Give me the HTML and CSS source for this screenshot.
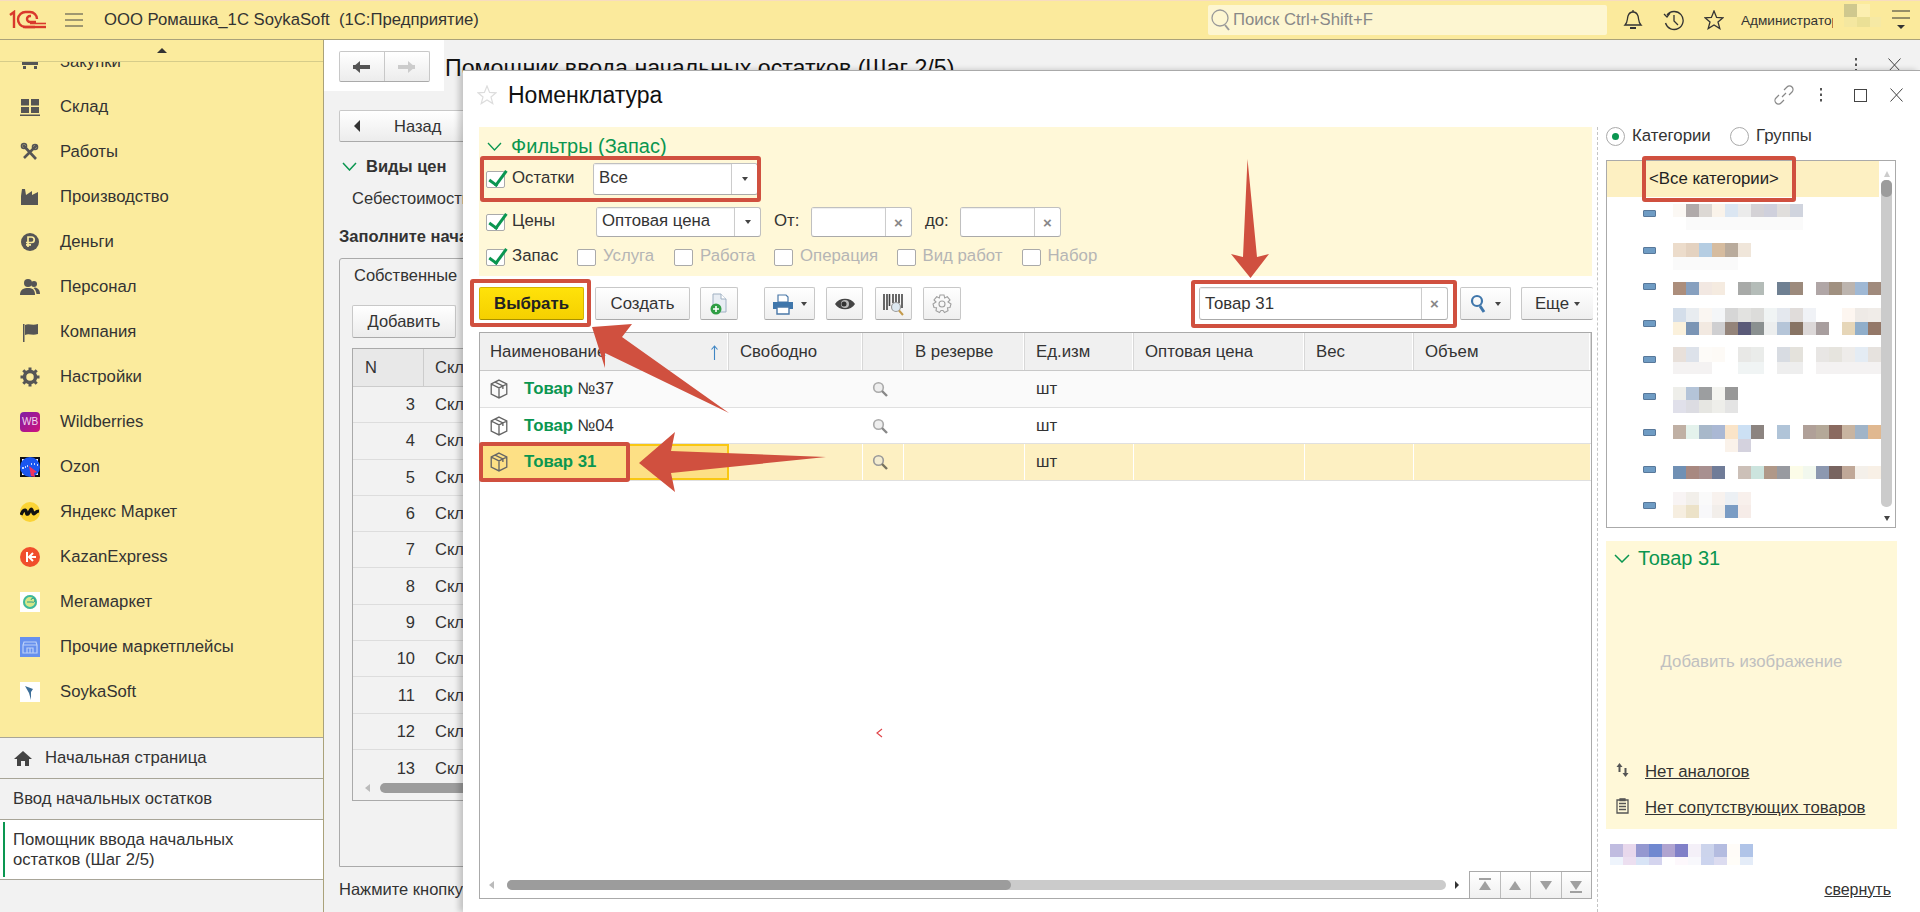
FILE: index.html
```html
<!DOCTYPE html>
<html lang='en'>

<head>
    <meta charset='UTF-8'>
    <title>Номенклатура</title>
    <link rel="stylesheet" href="styles.css">
</head>

<body>
    <div class='topbar'>
        <svg class='logo' width='38' height='20' viewBox='0 0 38 20' fill='none' stroke='#d9382c' stroke-width='2.4'>
            <path d='M1 5 L5 2 V18' />
            <path d='M26 17 H16 A7.5 7.5 0 1 1 17 2 H21 A7 7 0 0 1 28 9' />
            <path d='M27 12 H21 A3 3 0 1 1 21 6 H22' />
            <path d='M14 17 H37' />
            <path d='M21 13.5 H37' stroke-width='1.6' />
        </svg>
        <svg class='burger' width='18' height='14' viewBox='0 0 18 14' stroke='#444' stroke-width='1.2'>
            <path d='M0 1 H18 M0 7 H18 M0 13 H18' />
        </svg>
        <span class='app-title'>ООО Ромашка_1С SoykaSoft&nbsp; (1С:Предприятие)</span>
        <div class='global-search'>
            <svg width='20' height='24' viewBox='0 0 20 24' fill='none' stroke='#999' stroke-width='1.3'>
                <circle cx='9' cy='10' r='8' />
                <path d='M14 17 L18 22' stroke-width='2' />
            </svg>
            <span>Поиск Ctrl+Shift+F</span>
        </div>
        <svg class='top-icon bell' width='20' height='22' viewBox='0 0 20 22' fill='none' stroke='#333' stroke-width='1.3'>
            <path d='M2 16 C5 13 4 10 5 7 C6 4 8 3 10 3 C12 3 14 4 15 7 C16 10 15 13 18 16 Z' />
            <path d='M10 1 V3' />
            <path d='M7 19 H13' stroke-width='2' />
        </svg>
        <svg class='top-icon history' width='21' height='21' viewBox='0 0 21 21' fill='none' stroke='#333' stroke-width='1.3'>
            <path d='M4 5 A9 9 0 1 1 2.5 13' />
            <path d='M1 4 L4 7 L7 3' />
            <path d='M11 5 V11 L15 15' />
        </svg>
        <svg class='top-icon star' width='20' height='20' viewBox='0 0 20 20' fill='none' stroke='#333' stroke-width='1.3'>
            <path d='M10 1 L12.6 7.4 L19 7.8 L14 12 L15.8 18.6 L10 15 L4.2 18.6 L6 12 L1 7.8 L7.4 7.4 Z' />
        </svg>
        <span class='user-name'>Администратор</span>
        <svg class='avatar' width='48' height='32' viewBox='0 0 48 32'>
            <rect x='11' y='0' width='13' height='13' fill='#cfc88e' />
            <rect x='24' y='0' width='13' height='13' fill='#fcefb0' />
            <rect x='11' y='13' width='13' height='10' fill='#f4e7a0' />
            <rect x='24' y='13' width='13' height='10' fill='#ebe096' />
            <rect x='37' y='13' width='11' height='10' fill='#f6e9a4' />
        </svg>
        <svg class='top-menu' width='18' height='20' viewBox='0 0 18 20' stroke='#333' stroke-width='1.2'>
            <path d='M0 1 H18 M0 8 H18' />
            <path d='M5 15 H13 L9 19 Z' fill='#333' stroke='none' />
        </svg>
    </div>

    <div class='workspace'>
        <div class='sidebar'>
            <div class='side-scroll'><i class='tri-up'></i></div>
            <div class='side-list'>
                <div class='side-inner'>
                    <div class='side-item'>
                        <svg class='side-icon' viewBox='0 0 20 20' fill='#555'>
                            <path d='M2 4 H18 V13 H2 Z M3 14 H6 V17 H3 Z M14 14 H17 V17 H14 Z' />
                        </svg>Закупки
                    </div>
                    <div class='side-item'>
                        <svg class='side-icon' viewBox='0 0 20 20' fill='#555'>
                            <path d='M1 2 H9 V8.500 H1 Z M11 2 H19 V8.500 H11 Z M1 10 H9 V16 H1 Z M11 10 H19 V16 H11 Z M0 17.500 H20 V19 H0 Z' />
                        </svg>Склад
                    </div>
                    <div class='side-item'>
                        <svg class='side-icon' viewBox='0 0 20 20' fill='none' stroke='#555' stroke-width='2.6'>
                            <path d='M3 3 L16 17 M17 3 L4 16' />
                            <circle cx='15' cy='5' r='2.500' stroke-width='1.600' />
                            <circle cx='4' cy='4' r='2.500' stroke-width='1.600' />
                        </svg>Работы
                    </div>
                    <div class='side-item'>
                        <svg class='side-icon' viewBox='0 0 20 20' fill='#555'>
                            <path d='M1 18 V9 L2 2 H5 L6 8 L12 4 V8 L18 5 V18 Z' />
                        </svg>Производство
                    </div>
                    <div class='side-item'>
                        <svg class='side-icon' viewBox='0 0 20 20'>
                            <circle cx='10' cy='10' r='9' fill='#555' />
                            <path d='M8 15 V5 H11.500 A2.700 2.700 0 0 1 11.500 10.500 H6 M6 12.800 H11' fill='none' stroke='#fbeb9d' stroke-width='1.700' />
                        </svg>Деньги
                    </div>
                    <div class='side-item'>
                        <svg class='side-icon' viewBox='0 0 20 20' fill='#555'>
                            <circle cx='8' cy='6' r='4' />
                            <path d='M0 18 C0 12 4 11 8 11 C12 11 15 12 15 18 Z' />
                            <circle cx='14' cy='7' r='3' />
                            <path d='M15 10.500 C18 11 20 13 20 17 H16.500 C16 14 15 12 13.500 11 Z' />
                        </svg>Персонал
                    </div>
                    <div class='side-item'>
                        <svg class='side-icon' viewBox='0 0 20 20' fill='#555'>
                            <path d='M3 2 H4.500 V20 H3 Z M5 3 C9 1 12 4 18 2 V12 C12 14 9 11 5 13 Z' />
                        </svg>Компания
                    </div>
                    <div class='side-item'>
                        <svg class='side-icon' viewBox='0 0 20 20' fill='none' stroke='#555'>
                            <circle cx='10' cy='10' r='5.500' stroke-width='3.500' />
                            <path d='M10 0.500 V4 M10 16 V19.500 M0.500 10 H4 M16 10 H19.500 M3.300 3.300 L5.500 5.500 M14.500 14.500 L16.700 16.700 M16.700 3.300 L14.500 5.500 M5.500 14.500 L3.300 16.700' stroke-width='3' />
                        </svg>Настройки
                    </div>
                    <div class='side-item'>
                        <span class='side-badge wb'>WB</span>Wildberries
                    </div>
                    <div class='side-item'>
                        <svg class='side-icon' viewBox='0 0 20 20'>
                            <rect width='20' height='20' fill='#111' />
                            <rect x='2' y='2' width='16' height='16' fill='#fff' />
                            <circle cx='10' cy='10' r='10' fill='#1a56f0' />
                            <path d='M2 11 H4 M5 10 H6 M7 9 H8 M11 7 H12 M14 7 H15 M17 8 H18' stroke='#fff' stroke-width='1.500' />
                            <path d='M9 9 L17 15 L14 16 L15 20 L11 19 Z' fill='#f0345f' />
                        </svg>Ozon
                    </div>
                    <div class='side-item'>
                        <svg class='side-icon' viewBox='0 0 20 20'>
                            <circle cx='10' cy='10' r='10' fill='#fbd335' />
                            <path d='M1 13 C3 8 5 7 6 9 C7 11 6 13 8 12 C10 10 11 5 12 8 C13 11 13 13 15 11 C16 10 17 9 19 9' fill='none' stroke='#111' stroke-width='3.200' />
                        </svg>Яндекс Маркет
                    </div>
                    <div class='side-item'>
                        <svg class='side-icon' viewBox='0 0 20 20'>
                            <circle cx='10' cy='10' r='10' fill='#f04e2c' />
                            <path d='M7 5 V15 M16 10 H10 M13 6 L9 10 L13 14' fill='none' stroke='#fff' stroke-width='2' />
                        </svg>KazanExpress
                    </div>
                    <div class='side-item'>
                        <svg class='side-icon' viewBox='0 0 20 20'>
                            <rect width='20' height='20' fill='#fff' />
                            <circle cx='10' cy='10' r='7' fill='#d6e88a' />
                            <circle cx='10' cy='10' r='6' fill='none' stroke='#3db8a0' stroke-width='2' />
                            <path d='M7 10 H12 A2 2 0 1 0 11 8' fill='none' stroke='#2c9f8c' stroke-width='1' />
                        </svg>Мегамаркет
                    </div>
                    <div class='side-item'>
                        <svg class='side-icon' viewBox='0 0 20 20'>
                            <rect width='20' height='20' fill='#6690ee' />
                            <path d='M4 5 H16 L17 8 V16 H3 V8 Z M3 8 H17 M7 16 V11 H13 V16 M10 11 V16' fill='none' stroke='#bcd0f8' stroke-width='1.200' />
                        </svg>Прочие маркетплейсы
                    </div>
                    <div class='side-item'>
                        <svg class='side-icon' viewBox='0 0 20 20'>
                            <rect width='20' height='20' fill='#fff' />
                            <path d='M5 4 L13 7 L11 10 L11 18 L9 11 Z' fill='#3c6e98' />
                        </svg>SoykaSoft
                    </div>
                </div>
            </div>
            <div class='side-tab home'>
                <svg width='18' height='16' viewBox='0 0 18 16' fill='#444'>
                    <path d='M9 1 L18 9 H15 V16 H11 V11 H7 V16 H3 V9 H0 Z' />
                </svg>Начальная страница
            </div>
            <div class='side-tab'>Ввод начальных остатков</div>
            <div class='side-tab active'>Помощник ввода начальных<br>остатков (Шаг 2/5)</div>
            <div class='side-rest'></div>
        </div>

        <div class='main'>
            <div class='nav-block'>
                <div class='nav-btns'>
                    <span class='nav-btn'><i class='arrow-left'></i></span>
                    <span class='nav-btn off'><i class='arrow-right'></i></span>
                </div>
            </div>
            <div class='page-title'>Помощник ввода начальных остатков (Шаг 2/5)</div>
            <div class='page-tools'>
                <svg width='4' height='14' viewBox='0 0 4 14' fill='#555'>
                    <path d='M1 0 H3 V2.500 H1 Z M1 5.500 H3 V8 H1 Z M1 11 H3 V13.500 H1 Z' />
                </svg>
                <svg width='13' height='14' viewBox='0 0 13 14' stroke='#444'>
                    <path d='M0.500 0.500 L12.500 13.500 M12.500 0.500 L0.500 13.500' />
                </svg>
            </div>
            <div class='page-body'>
                <div class='back-btn'><i class='tri-left'></i><span>Назад</span></div>
                <div class='group-head'>
                    <svg class='chevron' width='15' height='9' viewBox='0 0 15 9' fill='none' stroke='#0a9650' stroke-width='1.500'>
                        <path d='M1 1 L7.500 8 L14 1' />
                    </svg>Виды цен
                </div>
                <div class='price-line'>Себестоимость</div>
                <div class='fill-head'>Заполните начальные</div>
                <div class='tab-panel'>
                    <div class='tab-name'>Собственные</div>
                    <div class='add-btn'>Добавить</div>
                    <div class='back-table'>
                        <div class='back-head'><span class='back-n'>N</span><span class='back-s'>Скл</span></div>
                        <div class='back-row'><span class='back-n'>3</span><span class='back-s'>Скл</span></div>
                        <div class='back-row'><span class='back-n'>4</span><span class='back-s'>Скл</span></div>
                        <div class='back-row'><span class='back-n'>5</span><span class='back-s'>Скл</span></div>
                        <div class='back-row'><span class='back-n'>6</span><span class='back-s'>Скл</span></div>
                        <div class='back-row'><span class='back-n'>7</span><span class='back-s'>Скл</span></div>
                        <div class='back-row'><span class='back-n'>8</span><span class='back-s'>Скл</span></div>
                        <div class='back-row'><span class='back-n'>9</span><span class='back-s'>Скл</span></div>
                        <div class='back-row'><span class='back-n'>10</span><span class='back-s'>Скл</span></div>
                        <div class='back-row'><span class='back-n'>11</span><span class='back-s'>Скл</span></div>
                        <div class='back-row'><span class='back-n'>12</span><span class='back-s'>Скл</span></div>
                        <div class='back-row last'><span class='back-n'>13</span><span class='back-s'>Скл</span></div>
                        <div class='back-scroll'><i class='tri-left small'></i><span class='back-thumb'></span></div>
                    </div>
                </div>
                <div class='press-line'>Нажмите кнопку</div>
            </div>
        </div>
    </div>

    <!-- selection form over the wizard -->
    <div class='modal'>
        <div class='modal-head'>
            <svg class='modal-star' width='20' height='20' viewBox='0 0 20 20' fill='none' stroke='#ddd' stroke-width='1.200'>
                <path d='M10 1 L12.600 7.400 L19 7.800 L14 12 L15.800 18.600 L10 15 L4.200 18.600 L6 12 L1 7.800 L7.400 7.400 Z' />
            </svg>
            <span class='modal-title'>Номенклатура</span>
            <svg class='head-link' width='20' height='20' viewBox='0 0 20 20' fill='none' stroke='#888' stroke-width='1.200'>
                <path d='M8 12 L12 8 M10 5 L13 2 A3 3 0 0 1 18 7 L15 10 M10 15 L7 18 A3 3 0 0 1 2 13 L5 10' />
            </svg>
            <svg class='head-dots' width='4' height='14' viewBox='0 0 4 14' fill='#555'>
                <path d='M1 0 H3 V2.500 H1 Z M1 5.500 H3 V8 H1 Z M1 11 H3 V13.500 H1 Z' />
            </svg>
            <span class='head-square'></span>
            <svg class='head-close' width='13' height='14' viewBox='0 0 13 14' stroke='#444'>
                <path d='M0.500 0.500 L12.500 13.500 M12.500 0.500 L0.500 13.500' />
            </svg>
        </div>

        <div class='modal-body'>
            <div class='left-col'>
                <div class='filters'>
                    <div class='filters-head'>
                        <svg width='15' height='9' viewBox='0 0 15 9' fill='none' stroke='#0a9650' stroke-width='1.300'>
                            <path d='M1 1 L7.500 8 L14 1' />
                        </svg>
                        <span>Фильтры (Запас)</span>
                    </div>
                    <div class='f-row r1'>
                        <label class='check lead1'><i class='box on'></i>Остатки</label>
                        <div class='field w-select1'><span class='f-val'>Все</span><span class='f-btn'><i class='tri-down'></i></span></div>
                    </div>
                    <div class='f-row r2'>
                        <label class='check lead2'><i class='box on'></i>Цены</label>
                        <div class='field w-select2'><span class='f-val'>Оптовая цена</span><span class='f-btn'><i class='tri-down'></i></span></div>
                        <span class='from-lbl'>От:</span>
                        <div class='field w-date'><span class='f-val'></span><span class='f-btn x'>×</span></div>
                        <span class='to-lbl'>до:</span>
                        <div class='field w-date'><span class='f-val'></span><span class='f-btn x'>×</span></div>
                    </div>
                    <div class='f-row r3'>
                        <label class='check c-zapas'><i class='box on'></i>Запас</label>
                        <label class='check off c-usl'><i class='box'></i>Услуга</label>
                        <label class='check off c-rab'><i class='box'></i>Работа</label>
                        <label class='check off c-op'><i class='box'></i>Операция</label>
                        <label class='check off c-vid'><i class='box'></i>Вид работ</label>
                        <label class='check off'><i class='box'></i>Набор</label>
                    </div>
                </div>

                <div class='toolbar'>
                    <span class='btn primary'>Выбрать</span>
                    <span class='btn create'>Создать</span>
                    <span class='btn icon-btn new'>
                        <svg width='20' height='22' viewBox='0 0 20 22'>
                            <path d='M4 1 H12 L17 6 V19 H4 Z' fill='#e8edf3' stroke='#9fb0c2' />
                            <path d='M12 1 V6 H17' fill='#fff' stroke='#9fb0c2' />
                            <circle cx='7' cy='16' r='5.500' fill='#2f9e44' />
                            <path d='M7 13 V19 M4 16 H10' stroke='#fff' stroke-width='1.600' />
                        </svg>
                    </span>
                    <span class='btn icon-btn print'>
                        <svg width='22' height='22' viewBox='0 0 22 22'>
                            <path d='M6 2 H14 L16 4 V9 H6 Z' fill='#fff' stroke='#4a78a8' stroke-width='1.200' />
                            <path d='M1 9 H21 V16 H1 Z' fill='#3f76ab' />
                            <path d='M5 14 H17 V21 H5 Z' fill='#fff' stroke='#4a78a8' stroke-width='1.400' />
                        </svg>
                        <i class='tri-down'></i>
                    </span>
                    <span class='btn icon-btn eye'>
                        <svg width='20' height='14' viewBox='0 0 20 14'>
                            <path d='M0 7 C4 0 16 0 20 7 C16 14 4 14 0 7 Z' fill='#444' />
                            <circle cx='10' cy='7' r='4' fill='#bbb' />
                            <circle cx='9' cy='7' r='2.500' fill='#333' />
                        </svg>
                    </span>
                    <span class='btn icon-btn barcode'>
                        <svg width='22' height='24' viewBox='0 0 22 24'>
                            <path d='M1 2 V18 M4 2 V18 M6.500 2 V14 M10 2 V11 M13 2 V10 M16 2 V11 M19 2 V16' stroke='#444' stroke-width='1.600' />
                            <circle cx='13' cy='15' r='4.500' fill='#dde8f0' stroke='#9a9a9a' stroke-width='1.200' />
                            <path d='M16 18.500 L20 23' stroke='#c49a4a' stroke-width='2' />
                        </svg>
                    </span>
                    <span class='btn icon-btn gear'>
                        <svg width='20' height='20' viewBox='0 0 20 20' fill='none' stroke='#a0a0a0' stroke-width='1.100'>
                            <path d='M8 1 H12 L12.700 4 L15.300 2.800 L18 6 L16 8 L19 10 L18 13.500 L15.500 13.700 L16 16.800 L12.500 18.500 L11 16.500 L9 16.500 L7.500 18.500 L4 16.800 L4.500 13.700 L2 13.500 L1 10 L4 8 L2 6 L4.700 2.800 L7.300 4 Z' />
                            <circle cx='10' cy='10' r='3' />
                        </svg>
                    </span>
                    <div class='field search-field'><span class='f-val'>Товар 31</span><span class='f-btn x'>×</span></div>
                    <span class='btn icon-btn find'>
                        <svg width='16' height='20' viewBox='0 0 16 20' fill='none' stroke='#3f76ab'>
                            <circle cx='7' cy='7' r='5' stroke-width='2.200' />
                            <path d='M10 12 L14 18' stroke-width='3' />
                        </svg>
                        <i class='tri-down'></i>
                    </span>
                    <span class='btn more'>Еще <i class='tri-down'></i></span>
                </div>

                <div class='grid-box'>
                    <div class='g-row g-head'>
                        <span class='cell'>Наименование
                            <svg class='sort' width='9' height='15' viewBox='0 0 9 15' fill='none' stroke='#3f86c4' stroke-width='1.100'>
                                <path d='M4.500 15 V1 M1.500 4.500 L4.500 1 L7.500 4.500' />
                            </svg>
                        </span>
                        <span class='cell'>Свободно</span>
                        <span class='cell'></span>
                        <span class='cell'>В резерве</span>
                        <span class='cell'>Ед.изм</span>
                        <span class='cell'>Оптовая цена</span>
                        <span class='cell'>Вес</span>
                        <span class='cell'>Объем</span>
                    </div>
                    <div class='g-row odd'>
                        <span class='cell name'>
                            <svg class='cube' width='18' height='20' viewBox='0 0 16 18' fill='none' stroke='#666' stroke-width='1.200'>
                                <path d='M8 1 L15 4.500 V13.500 L8 17 L1 13.500 V4.500 Z M1 4.500 L8 8 L15 4.500 M8 8 V17 M4.500 2.800 L11.500 6.300 V9' />
                            </svg><b>Товар</b> №37
                        </span>
                        <span class='cell'></span>
                        <span class='cell mag'>
                            <svg width='16' height='16' viewBox='0 0 16 16' fill='none'>
                                <circle cx='6.500' cy='6.500' r='4.800' fill='#eee' stroke='#aaa' stroke-width='1.600' />
                                <path d='M10 10 L15 15' stroke='#888' stroke-width='2.400' />
                            </svg>
                        </span>
                        <span class='cell'></span>
                        <span class='cell'>шт</span>
                        <span class='cell'></span>
                        <span class='cell'></span>
                        <span class='cell'></span>
                    </div>
                    <div class='g-row'>
                        <span class='cell name'>
                            <svg class='cube' width='18' height='20' viewBox='0 0 16 18' fill='none' stroke='#666' stroke-width='1.200'>
                                <path d='M8 1 L15 4.500 V13.500 L8 17 L1 13.500 V4.500 Z M1 4.500 L8 8 L15 4.500 M8 8 V17 M4.500 2.800 L11.500 6.300 V9' />
                            </svg><b>Товар</b> №04
                        </span>
                        <span class='cell'></span>
                        <span class='cell mag'>
                            <svg width='16' height='16' viewBox='0 0 16 16' fill='none'>
                                <circle cx='6.500' cy='6.500' r='4.800' fill='#eee' stroke='#aaa' stroke-width='1.600' />
                                <path d='M10 10 L15 15' stroke='#888' stroke-width='2.400' />
                            </svg>
                        </span>
                        <span class='cell'></span>
                        <span class='cell'>шт</span>
                        <span class='cell'></span>
                        <span class='cell'></span>
                        <span class='cell'></span>
                    </div>
                    <div class='g-row selected'>
                        <span class='cell name current'>
                            <svg class='cube' width='18' height='20' viewBox='0 0 16 18' fill='none' stroke='#666' stroke-width='1.200'>
                                <path d='M8 1 L15 4.500 V13.500 L8 17 L1 13.500 V4.500 Z M1 4.500 L8 8 L15 4.500 M8 8 V17 M4.500 2.800 L11.500 6.300 V9' />
                            </svg><b>Товар 31</b>
                        </span>
                        <span class='cell'></span>
                        <span class='cell mag'>
                            <svg width='16' height='16' viewBox='0 0 16 16' fill='none'>
                                <circle cx='6.500' cy='6.500' r='4.800' fill='#f3ecd0' stroke='#999' stroke-width='1.600' />
                                <path d='M10 10 L15 15' stroke='#77735f' stroke-width='2.400' />
                            </svg>
                        </span>
                        <span class='cell'></span>
                        <span class='cell'>шт</span>
                        <span class='cell'></span>
                        <span class='cell'></span>
                        <span class='cell'></span>
                    </div>
                    <div class='g-fill'></div>
                    <div class='g-foot'>
                        <i class='tri-left small pale'></i>
                        <span class='hscroll'><span class='hthumb'></span></span>
                        <i class='tri-right small'></i>
                        <span class='pager'>
                            <span class='pg'><i class='tri-up pg-tri bar-top'></i></span>
                            <span class='pg'><i class='tri-up pg-tri'></i></span>
                            <span class='pg'><i class='tri-down pg-tri'></i></span>
                            <span class='pg'><i class='tri-down pg-tri bar-bottom'></i></span>
                        </span>
                    </div>
                </div>
            </div>

            <div class='right-col'>
                <div class='radios'>
                    <span class='radio on'><i></i></span><span class='r-label first'>Категории</span>
                    <span class='radio'></span><span class='r-label'>Группы</span>
                </div>

                <div class='cat-list'>
                    <div class='cat-all'>&lt;Все категории&gt;</div>
                    <div class='cat-row'><i class='cat-icon'></i></div>
                    <div class='cat-row'><i class='cat-icon'></i></div>
                    <div class='cat-row'><i class='cat-icon'></i></div>
                    <div class='cat-row'><i class='cat-icon'></i></div>
                    <div class='cat-row'><i class='cat-icon'></i></div>
                    <div class='cat-row'><i class='cat-icon'></i></div>
                    <div class='cat-row'><i class='cat-icon'></i></div>
                    <div class='cat-row'><i class='cat-icon'></i></div>
                    <div class='cat-row'><i class='cat-icon'></i></div>
                    <!-- pixelated category names -->
                    <svg class='cat-blur' width='208' height='314' viewBox='0 0 208 314'>
                        <g>
                            <rect x='0' width='13' height='13' fill='#fbf8f4' /><rect x='13' width='13' height='13' fill='#b0aaaa' /><rect x='26' width='13' height='13' fill='#dcd8d4' /><rect x='39' width='13' height='13' fill='#faf3ea' /><rect x='52' width='13' height='13' fill='#dbe6f2' /><rect x='65' width='13' height='13' fill='#ebebeb' /><rect x='78' width='13' height='13' fill='#d4d2d6' /><rect x='91' width='13' height='13' fill='#cfd0dc' /><rect x='104' width='13' height='13' fill='#e0dedc' /><rect x='117' width='13' height='13' fill='#d0d4de' />
                            <rect x='13' y='13' width='117' height='13' fill='#fafafa' />
                        </g>
                        <g transform='translate(0 39)'>
                            <rect x='0' width='13' height='14' fill='#ecdccb' /><rect x='13' width='13' height='14' fill='#e4d2c0' /><rect x='26' width='13' height='14' fill='#b5cde2' /><rect x='39' width='13' height='14' fill='#d6bc9f' /><rect x='52' width='13' height='14' fill='#b9ab9c' /><rect x='65' width='13' height='14' fill='#f0e6da' />
                            <rect x='0' y='14' width='65' height='13' fill='#fafafa' />
                        </g>
                        <g transform='translate(0 78)'>
                            <rect x='0' width='13' height='13' fill='#ac8e7c' /><rect x='13' width='13' height='13' fill='#87a0bf' /><rect x='26' width='13' height='13' fill='#f2e8e2' /><rect x='39' width='13' height='13' fill='#f5ebe0' /><rect x='65' width='13' height='13' fill='#a8aaa8' /><rect x='78' width='13' height='13' fill='#b4bcb8' /><rect x='104' width='13' height='13' fill='#6f8092' /><rect x='117' width='13' height='13' fill='#9c8a7c' /><rect x='143' width='13' height='13' fill='#b0a6a6' /><rect x='156' width='13' height='13' fill='#a09080' /><rect x='169' width='13' height='13' fill='#bcb4ae' /><rect x='182' width='13' height='13' fill='#9fb8d4' /><rect x='195' width='13' height='13' fill='#a08a7c' />
                        </g>
                        <g transform='translate(0 104)'>
                            <rect x='0' width='13' height='14' fill='#d4deea' /><rect x='13' width='13' height='14' fill='#e8ecf0' /><rect x='26' width='13' height='14' fill='#faf6f2' /><rect x='39' width='13' height='14' fill='#f4f6f8' /><rect x='52' width='13' height='14' fill='#d6d6d6' /><rect x='65' width='13' height='14' fill='#e2e2e0' /><rect x='78' width='13' height='14' fill='#dcdcda' /><rect x='91' width='13' height='14' fill='#f0f4f4' /><rect x='104' width='13' height='14' fill='#e4e8ee' /><rect x='117' width='13' height='14' fill='#e0dcda' /><rect x='130' width='13' height='14' fill='#f0f2f6' /><rect x='169' width='13' height='14' fill='#fdf6f0' /><rect x='182' width='13' height='14' fill='#eeeae6' /><rect x='195' width='13' height='14' fill='#f0ece8' />
                            <rect x='0' y='14' width='13' height='13' fill='#fbf1dc' /><rect x='13' y='14' width='13' height='13' fill='#7b95b5' /><rect x='26' y='14' width='13' height='13' fill='#f2e9e1' /><rect x='39' y='14' width='13' height='13' fill='#cfcfd1' /><rect x='52' y='14' width='13' height='13' fill='#94847a' /><rect x='65' y='14' width='13' height='13' fill='#5a5a78' /><rect x='78' y='14' width='13' height='13' fill='#8a9090' /><rect x='91' y='14' width='13' height='13' fill='#eceeee' /><rect x='104' y='14' width='13' height='13' fill='#b5c5d8' /><rect x='117' y='14' width='13' height='13' fill='#887464' /><rect x='130' y='14' width='13' height='13' fill='#dcd8d8' /><rect x='143' y='14' width='13' height='13' fill='#a89e9e' /><rect x='169' y='14' width='13' height='13' fill='#e6d6b8' /><rect x='182' y='14' width='13' height='13' fill='#90aeca' /><rect x='195' y='14' width='13' height='13' fill='#947868' />
                        </g>
                        <g transform='translate(0 143)'>
                            <rect x='0' width='13' height='15' fill='#e8e0da' /><rect x='13' width='13' height='15' fill='#dde2ea' /><rect x='26' width='13' height='15' fill='#fdfbf8' /><rect x='39' width='13' height='15' fill='#fdfaf6' /><rect x='65' width='13' height='15' fill='#e8e8e6' /><rect x='78' width='13' height='15' fill='#eaecea' /><rect x='104' width='13' height='15' fill='#d8dce2' /><rect x='117' width='13' height='15' fill='#e4e2dc' /><rect x='143' width='13' height='15' fill='#e8e6e4' /><rect x='156' width='13' height='15' fill='#e6e4de' /><rect x='169' width='13' height='15' fill='#eeecea' /><rect x='182' width='13' height='15' fill='#e4ecf4' /><rect x='195' width='13' height='15' fill='#e6e2de' />
                            <rect x='0' y='15' width='39' height='12' fill='#f4f2f2' /><rect x='65' y='15' width='26' height='12' fill='#f0f4f4' /><rect x='104' y='15' width='26' height='12' fill='#eeeeee' /><rect x='143' y='15' width='65' height='12' fill='#f4f2f2' />
                        </g>
                        <g transform='translate(0 183)'>
                            <rect x='0' width='13' height='13' fill='#eeeeea' /><rect x='13' width='13' height='13' fill='#b4c4d8' /><rect x='26' width='13' height='13' fill='#9c9ea0' /><rect x='39' width='13' height='13' fill='#f4f4f0' /><rect x='52' width='13' height='13' fill='#989898' />
                            <rect x='0' y='13' width='13' height='13' fill='#e0e0ea' /><rect x='13' y='13' width='13' height='13' fill='#dcdce2' /><rect x='26' y='13' width='13' height='13' fill='#e6e6e2' /><rect x='39' y='13' width='13' height='13' fill='#eeeeea' /><rect x='52' y='13' width='13' height='13' fill='#e4e4e4' />
                        </g>
                        <g transform='translate(0 221)'>
                            <rect x='0' width='13' height='14' fill='#c0b0a4' /><rect x='13' width='13' height='14' fill='#e4f2ec' /><rect x='26' width='13' height='14' fill='#a8b8ca' /><rect x='39' width='13' height='14' fill='#aab8d4' /><rect x='52' width='13' height='14' fill='#fae4c8' /><rect x='65' width='13' height='14' fill='#cce0f4' /><rect x='78' width='13' height='14' fill='#8c8480' /><rect x='104' width='13' height='14' fill='#b0c4d8' /><rect x='130' width='13' height='14' fill='#b0a098' /><rect x='143' width='13' height='14' fill='#b4a898' /><rect x='156' width='13' height='14' fill='#8a6a60' /><rect x='169' width='13' height='14' fill='#c8b4a0' /><rect x='182' width='13' height='14' fill='#a0b4c8' /><rect x='195' width='13' height='14' fill='#e0b890' />
                            <rect x='52' y='14' width='13' height='13' fill='#faf2ea' /><rect x='65' y='14' width='13' height='13' fill='#d4d2de' />
                        </g>
                        <g transform='translate(0 262)'>
                            <rect x='0' width='13' height='13' fill='#7090b4' /><rect x='13' width='13' height='13' fill='#a88880' /><rect x='26' width='13' height='13' fill='#a89090' /><rect x='39' width='13' height='13' fill='#707c98' /><rect x='65' width='13' height='13' fill='#ccc0b8' /><rect x='78' width='13' height='13' fill='#cce4de' /><rect x='91' width='13' height='13' fill='#b09888' /><rect x='104' width='13' height='13' fill='#989aa0' /><rect x='117' width='13' height='13' fill='#fcfce8' /><rect x='130' width='13' height='13' fill='#f2f8ee' /><rect x='143' width='13' height='13' fill='#8c98b0' /><rect x='156' width='13' height='13' fill='#786460' /><rect x='169' width='13' height='13' fill='#c0a898' /><rect x='182' width='13' height='13' fill='#f4f0ea' /><rect x='195' width='13' height='13' fill='#f8f0e6' />
                        </g>
                        <g transform='translate(0 288)'>
                            <rect x='0' width='13' height='13' fill='#f8f4f4' /><rect x='13' width='13' height='13' fill='#f2efea' /><rect x='26' width='13' height='13' fill='#fafafa' /><rect x='39' width='13' height='13' fill='#f8f2ee' /><rect x='52' width='13' height='13' fill='#ecf0f4' /><rect x='65' width='13' height='13' fill='#f8f0ec' />
                            <rect x='0' y='13' width='13' height='13' fill='#f6eee0' /><rect x='13' y='13' width='13' height='13' fill='#ece2c8' /><rect x='26' y='13' width='13' height='13' fill='#f8f8fa' /><rect x='39' y='13' width='13' height='13' fill='#f2eeea' /><rect x='52' y='13' width='13' height='13' fill='#7a9cc4' /><rect x='65' y='13' width='13' height='13' fill='#f6ece8' />
                        </g>
                    </svg>
                    <div class='cat-scroll'>
                        <i class='tri-up small pale'></i>
                        <span class='vtrack'><span class='vthumb'></span></span>
                        <i class='tri-down small dark'></i>
                    </div>
                </div>

                <div class='card'>
                    <div class='card-head'>
                        <svg width='16' height='9' viewBox='0 0 16 9' fill='none' stroke='#0a9650' stroke-width='1.500'>
                            <path d='M1 1 L8 8 L15 1' />
                        </svg>
                        <span>Товар 31</span>
                    </div>
                    <div class='card-pic'>Добавить изображение</div>
                    <div class='card-link first'>
                        <svg width='12' height='14' viewBox='0 0 12 14' fill='#555'>
                            <path d='M3 0 L6 4 H4 V9 H2 V4 H0 Z M9 14 L12 10 H10 V5 H8 V10 H6 Z' />
                        </svg>
                        <a>Нет аналогов</a>
                    </div>
                    <div class='card-link'>
                        <svg width='13' height='16' viewBox='0 0 13 16' fill='none' stroke='#555' stroke-width='1.300'>
                            <path d='M1 2 H12 V15 H1 Z M3 5.500 H10 M3 8.500 H10 M3 11.500 H10' />
                            <path d='M4 0.800 H9 V2.500 H4 Z' fill='#555' />
                        </svg>
                        <a>Нет сопутствующих товаров</a>
                    </div>
                </div>

                <svg class='owner-blur' width='143' height='21' viewBox='0 0 143 21'>
                    <rect x='0' width='13' height='13' fill='#c0bce0' /><rect x='13' width='13' height='13' fill='#e8d8ec' /><rect x='26' width='13' height='13' fill='#9498d0' /><rect x='39' width='13' height='13' fill='#7088d0' /><rect x='52' width='13' height='13' fill='#b0a4d0' /><rect x='65' width='13' height='13' fill='#8080c8' /><rect x='78' width='13' height='13' fill='#f4f0f8' /><rect x='91' width='13' height='13' fill='#ccd4ec' /><rect x='104' width='13' height='13' fill='#b4bce0' /><rect x='117' width='13' height='13' fill='#fffcf8' /><rect x='130' width='13' height='13' fill='#b0c4e8' />
                    <rect x='0' y='13' width='13' height='8' fill='#eef4fc' /><rect x='13' y='13' width='13' height='8' fill='#ecdff0' /><rect x='26' y='13' width='13' height='8' fill='#d8e4f6' /><rect x='39' y='13' width='13' height='8' fill='#d4d4ee' /><rect x='65' y='13' width='13' height='8' fill='#fdf8fc' /><rect x='78' y='13' width='13' height='8' fill='#f8f8fc' /><rect x='91' y='13' width='13' height='8' fill='#ccd4ee' /><rect x='104' y='13' width='13' height='8' fill='#dcdcf0' /><rect x='117' y='13' width='13' height='8' fill='#fffdf8' /><rect x='130' y='13' width='13' height='8' fill='#e4ecf8' />
                </svg>
                <a class='collapse'>свернуть</a>
            </div>
        </div>
    </div>

    <!-- red marks drawn on the screenshot -->
    <svg class='marks' width='1920' height='912' viewBox='0 0 1920 912' fill='none' stroke='#d0503f' stroke-width='4'>
        <rect x='482' y='158' width='277' height='42' rx='1' />
        <rect x='472' y='281' width='117' height='44' rx='1' />
        <rect x='1193' y='282' width='262' height='44' rx='1' />
        <rect x='1644' y='158' width='150' height='42' rx='1' />
        <rect x='481' y='444' width='147' height='36' rx='1' />
        <g fill='#d0503f' stroke='none'>
            <path d='M592 327 L632 324 L622 337 L729 413 L605 353 L605 368 Z' />
            <path d='M639 463 L675 432 L671 451 L826 457 L671 473 L675 492 Z' />
            <path d='M1247.500 159 L1257 257 L1269 254 L1250.500 278 L1231 254 L1243 257 Z' />
        </g>
        <path d='M882 729 L877 733 L882 737' stroke='#e0454a' stroke-width='1.200' />
    </svg>
</body>

</html>
```

FILE: styles.css
```css
* {
    padding: 0;
    margin: 0;
    box-sizing: border-box;
}

html {
    height: 100%;
}

body {
    height: 912px;
    width: 1920px;
    overflow: hidden;
    position: relative;
    display: flex;
    flex-direction: column;
    font-family: "Liberation Sans", Arial, sans-serif;
    font-size: 16.700px;
    color: #333;
    background: #f2f2f2;
}

i {
    display: inline-block;
    font-style: normal;
}

/* small triangles used all over the form */
.tri-up,
.tri-down,
.tri-left,
.tri-right {
    width: 0;
    height: 0;
    border-style: solid;
    border-color: transparent;
}

.tri-up {
    border-width: 0 5px 5px 5px;
    border-bottom-color: #333;
}

.tri-down {
    border-width: 4px 3.5px 0 3.5px;
    border-top-color: #444;
}

.tri-left {
    border-width: 6px 6px 6px 0;
    border-right-color: #333;
}

.tri-right {
    border-width: 6px 0 6px 6px;
    border-left-color: #333;
}

.tri-left.small {
    border-width: 4px 5px 4px 0;
    border-right-color: #bbb;
}

.tri-right.small {
    border-width: 4px 0 4px 4px;
    border-left-color: #333;
}

.tri-up.small {
    border-width: 0 3.5px 6px 3.5px;
    border-bottom-color: #ccc;
}

.tri-down.small {
    border-width: 5px 3.5px 0 3.5px;
    border-top-color: #444;
}

/* top bar */
.topbar {
    height: 40px;
    flex: none;
    display: flex;
    align-items: center;
    background: #fbea9c;
    border-top: 1px solid #f7dcc0;
    border-bottom: 1px solid #aaa27a;
}

.logo {
    margin-left: 9px;
}

.burger {
    margin-left: 18px;
}

.app-title {
    margin-left: 21px;
    width: 1104px;
    white-space: nowrap;
}

.global-search {
    width: 399px;
    height: 30px;
    display: flex;
    align-items: center;
    padding-left: 3px;
    background: #fdf6d1;
    border-radius: 2px;
    color: #888;
}

.global-search span {
    margin-left: 2px;
}

.bell {
    margin-left: 16px;
}

.history {
    margin-left: 20px;
}

.star {
    margin-left: 20px;
}

.user-name {
    margin-left: 17px;
    width: 92px;
    overflow: hidden;
    white-space: nowrap;
    font-size: 13.600px;
}

.avatar {
    flex: none;
}

.top-menu {
    margin-left: 11px;
}

/* left panel */
.workspace {
    flex: 1;
    display: flex;
    min-height: 0;
}

.sidebar {
    width: 324px;
    flex: none;
    display: flex;
    flex-direction: column;
    border-right: 1px solid #aaa27a;
    background: #fbeb9d;
}

.side-scroll {
    height: 22px;
    flex: none;
    display: flex;
    align-items: center;
    justify-content: center;
    border-bottom: 1px solid #d6cc8a;
}

.side-list {
    height: 675px;
    flex: none;
    overflow: hidden;
}

.side-inner {
    margin-top: -23px;
}

.side-item {
    height: 45px;
    display: flex;
    align-items: center;
    padding-left: 20px;
    white-space: nowrap;
}

.side-icon,
.side-badge {
    width: 20px;
    height: 20px;
    margin-right: 20px;
    flex: none;
}

.side-badge.wb {
    border-radius: 4px;
    background: linear-gradient(135deg, #7d1fa5, #d0117d);
    color: #f3d6ee;
    font-size: 10px;
    line-height: 20px;
    text-align: center;
}

.side-tab {
    flex: none;
    height: 41px;
    display: flex;
    align-items: center;
    padding-left: 13px;
    background: #f2f2f2;
    border-top: 1px solid #a8a598;
}

.side-tab.home {
    padding-left: 14px;
}

.side-tab.home svg {
    margin-right: 13px;
}

.side-tab.active {
    height: 61px;
    background: #fff;
    line-height: 20px;
    position: relative;
    border-bottom: 1px solid #a8a598;
}

.side-tab.active::before {
    content: '';
    position: absolute;
    left: 3px;
    top: 2px;
    bottom: 2px;
    width: 2px;
    background: #0a9650;
}

.side-rest {
    flex: 1;
    min-height: 0;
    background: #f2f2f2;
}

/* wizard page behind the form */
.main {
    flex: 1;
    position: relative;
    overflow: hidden;
    min-width: 0;
    font-size: 16.500px;
}

.nav-block {
    width: 120px;
    height: 51px;
    background: #fff;
    padding: 11px 0 0 15px;
}

.nav-btns {
    width: 91px;
    height: 31px;
    display: flex;
    border: 1px solid #c8c8c8;
    border-bottom-color: #aaa;
    border-radius: 2px;
    background: linear-gradient(#fff, #ececec);
}

.nav-btn {
    width: 46px;
    display: flex;
    align-items: center;
    justify-content: center;
    border-right: 1px solid #c8c8c8;
}

.nav-btn.off {
    border-right: 0;
}

.arrow-left,
.arrow-right {
    width: 17px;
    height: 4px;
    background: #555;
    position: relative;
}

.arrow-right {
    background: #ccc;
}

.arrow-left::before,
.arrow-right::before {
    content: '';
    position: absolute;
    top: -4px;
    border-style: solid;
    border-color: transparent;
}

.arrow-left::before {
    left: 0;
    border-width: 6px 7px 6px 0;
    border-right-color: #555;
}

.arrow-right::before {
    right: 0;
    border-width: 6px 0 6px 7px;
    border-left-color: #ccc;
}

.page-title {
    position: absolute;
    left: 121px;
    top: 15px;
    font-size: 23.200px;
    color: #111;
    white-space: nowrap;
}

.page-tools {
    position: absolute;
    right: 19px;
    top: 18px;
    display: flex;
    gap: 30px;
    align-items: center;
}

.page-body {
    padding: 19px 0 0 15px;
}

.back-btn {
    width: 200px;
    height: 32px;
    display: flex;
    align-items: center;
    padding-left: 14px;
    border: 1px solid #c8c8c8;
    border-bottom-color: #aaa;
    border-radius: 2px;
    background: linear-gradient(#fff, #ececec);
}

.back-btn span {
    margin-left: 34px;
}

.group-head {
    margin-top: 14px;
    height: 20px;
    display: flex;
    align-items: center;
    font-weight: bold;
}

.chevron {
    margin: 0 9px 0 3px;
}

.price-line {
    margin: 13px 0 0 13px;
    white-space: nowrap;
}

.fill-head {
    margin-top: 19px;
    font-weight: bold;
    white-space: nowrap;
}

.tab-panel {
    margin-top: 12px;
    width: 300px;
    height: 609px;
    padding: 0 0 0 12px;
    border: 1px solid #aaa;
    border-radius: 3px 0 0 0;
    background: #f2f2f2;
}

.tab-name {
    height: 46px;
    padding: 7px 0 0 2px;
}

.add-btn {
    width: 104px;
    height: 33px;
    line-height: 30px;
    text-align: center;
    border: 1px solid #c8c8c8;
    border-bottom-color: #aaa;
    border-radius: 2px;
    background: linear-gradient(#fff, #ececec);
}

.back-table {
    margin-top: 10px;
    height: 453px;
    border: 1px solid #aaa;
    overflow: hidden;
}

.back-head,
.back-row {
    display: flex;
    align-items: center;
    height: 36.300px;
    border-bottom: 1px solid #ddd;
}

.back-head {
    height: 38px;
    background: #e8e8e8;
    border-bottom: 1px solid #ccc;
}

.back-row.last {
    border-bottom: 0;
}

.back-n {
    width: 62px;
    text-align: right;
}

.back-head .back-n {
    width: 71px;
    text-align: left;
    padding: 0 0 0 12px;
    border-right: 1px solid #ccc;
    height: 100%;
    line-height: 37px;
}

.back-s {
    margin-left: 11px;
}

.back-row .back-s {
    margin-left: 20px;
}

.back-scroll {
    display: flex;
    align-items: center;
    height: 12px;
    margin-top: -4px;
    padding-left: 12px;
}

.back-thumb {
    margin-left: 10px;
    width: 100px;
    height: 10px;
    border-radius: 5px;
    background: #9c9c9c;
}

.press-line {
    margin-top: 13px;
    white-space: nowrap;
}

/* selection form */
.modal {
    position: absolute;
    left: 463px;
    top: 70px;
    width: 1457px;
    height: 842px;
    display: flex;
    flex-direction: column;
    background: #fff;
    border-top: 1px solid #aaa;
    box-shadow: -4px 0 6px rgba(0, 0, 0, 0.2);
    font-size: 16.800px;
}

.modal-head {
    height: 56px;
    flex: none;
    display: flex;
    align-items: center;
    padding-bottom: 8px;
}

.modal-star {
    margin-left: 14px;
}

.modal-title {
    margin-left: 11px;
    font-size: 23px;
    color: #111;
    width: 1283px;
}

.head-dots {
    margin-left: 25px;
}

.head-square {
    margin-left: 31px;
    width: 13px;
    height: 13px;
    border: 1px solid #444;
}

.head-close {
    margin-left: 23px;
}

.head-link {
    margin-left: -17px;
}

.modal-body {
    flex: 1;
    display: flex;
    min-height: 0;
}

.left-col {
    margin-left: 16px;
    width: 1113px;
    flex: none;
    display: flex;
    flex-direction: column;
    padding-bottom: 13px;
}

.filters {
    height: 149px;
    flex: none;
    background: #fff8d8;
}

.filters-head {
    height: 36px;
    display: flex;
    align-items: center;
    padding: 2px 0 0 8px;
    color: #0a9650;
    font-size: 20px;
}

.filters-head span {
    margin-left: 9px;
}

.f-row {
    display: flex;
    align-items: center;
    padding-left: 7px;
}

.r1 {
    height: 32px;
}

.r2 {
    height: 30px;
    margin-top: 12px;
}

.r3 {
    height: 30px;
    margin-top: 5px;
}

.check {
    display: flex;
    align-items: center;
    padding-bottom: 2px;
    white-space: nowrap;
}

.check.off {
    color: #b5b5b5;
}

.box {
    width: 19px;
    height: 17px;
    margin-right: 7px;
    flex: none;
    position: relative;
    top: 1px;
    background: #fff;
    border: 1px solid #aaa;
    border-radius: 2px;
}

.box.on::after {
    content: '';
    position: absolute;
    left: 6px;
    top: -5px;
    width: 7px;
    height: 16px;
    border: solid #0a9650;
    border-width: 0 3px 3px 0;
    transform: rotate(36deg);
}

.lead1 {
    width: 107px;
}

.lead2 {
    width: 110px;
}

.c-zapas {
    width: 91px;
}

.c-usl {
    width: 97px;
}

.c-rab {
    width: 100px;
}

.c-op {
    width: 122.500px;
}

.c-vid {
    width: 125px;
}

.field {
    display: flex;
    background: #fff;
    border: 1px solid #c0c0c0;
    border-bottom-color: #aaa;
    border-radius: 3px;
    flex: none;
}

.f-val {
    flex: 1;
    display: flex;
    align-items: center;
    padding: 0 0 2px 5px;
    border-right: 1px solid #ccc;
    box-shadow: inset 0 1px 1px #eee;
}

.f-btn {
    width: 25px;
    flex: none;
    display: flex;
    align-items: center;
    justify-content: center;
}

.f-btn.x {
    color: #888;
    font-size: 15px;
    font-weight: bold;
}

.w-select1 {
    width: 165px;
    height: 32px;
}

.w-select2 {
    width: 165px;
    height: 30px;
}

.from-lbl {
    margin: 0 0 2px 13px;
    width: 37px;
}

.w-date {
    width: 101px;
    height: 30px;
}

.to-lbl {
    margin: 0 0 2px 13px;
    width: 35px;
}

.toolbar {
    margin-top: 11px;
    height: 33px;
    flex: none;
    display: flex;
    align-items: stretch;
}

.btn {
    display: flex;
    align-items: center;
    justify-content: center;
    border: 1px solid #c8c8c8;
    border-bottom-color: #aaa;
    border-radius: 2px;
    background: linear-gradient(#fff, #efefef);
    flex: none;
}

.primary {
    width: 105px;
    font-weight: bold;
    color: #222;
    background: linear-gradient(#ffe20a, #f5d000);
    border-color: #d4b400;
    border-bottom-color: #a89000;
}

.create {
    margin-left: 11px;
    width: 95px;
}

.icon-btn.new {
    margin-left: 10px;
    width: 38px;
}

.icon-btn.print {
    margin-left: 26px;
    width: 51px;
    gap: 7px;
}

.icon-btn.eye {
    margin-left: 11px;
    width: 37px;
}

.icon-btn.barcode {
    margin-left: 12px;
    width: 37px;
}

.icon-btn.gear {
    margin-left: 11px;
    width: 38px;
}

.search-field {
    margin-left: 238px;
    width: 249px;
}

.search-field .f-val {
    padding-bottom: 0;
}

.search-field .f-btn {
    width: 25px;
}

.icon-btn.find {
    margin-left: 12px;
    width: 51px;
    gap: 9px;
}

.more {
    margin-left: 10px;
    width: 72px;
    gap: 5px;
    border-right: 0;
}

/* goods list */
.grid-box {
    margin-top: 12px;
    flex: 1;
    display: flex;
    flex-direction: column;
    min-height: 0;
    border: 1px solid #aaa;
}

.g-row {
    display: grid;
    grid-template-columns: 249px 134px 41px 121px 109px 171px 109px 177px;
    height: 36.500px;
    flex: none;
    border-bottom: 1px solid #e0e0e0;
}

.g-row .cell {
    padding-top: 1px;
}

.g-head {
    height: 38px;
    background: #f0f0f0;
    border-bottom: 1px solid #c8c8c8;
}

.g-head .cell {
    padding-top: 0;
    border-right: 1px solid #d8d8d8;
    box-shadow: inset -1px 0 0 #fff;
}

.odd {
    background: #fafafa;
}

.selected {
    background: #fdf0c2;
}

.selected .cell {
    border-right: 1px solid #fff;
}

.cell {
    display: flex;
    align-items: center;
    padding-left: 11px;
    position: relative;
    white-space: nowrap;
}

.cell:first-child {
    padding-left: 10px;
}

.sort {
    position: absolute;
    right: 9px;
    top: 12px;
}

.cell b {
    color: #0a9650;
    margin-right: 4px;
}

.cube {
    margin-right: 16px;
}

.cell.current {
    background: #fde085;
    border: 2px solid #f9c712 !important;
    padding-left: 8px;
}

.cell.mag {
    padding-left: 9px;
}

.g-fill {
    flex: 1;
    min-height: 0;
}

.g-foot {
    height: 27px;
    flex: none;
    display: flex;
    align-items: center;
    padding-left: 9px;
}

.hscroll {
    margin-left: 13px;
    width: 939px;
    height: 10px;
    border-radius: 5px;
    background: #cbcbcb;
}

.hthumb {
    display: block;
    width: 504px;
    height: 10px;
    border-radius: 5px;
    background: #9c9c9c;
}

.tri-right.small {
    margin-left: 9px;
}

.pager {
    margin-left: 10px;
    flex: 1;
    height: 27px;
    display: flex;
    border-left: 1px solid #aaa;
    border-top: 1px solid #aaa;
}

.pg {
    flex: 1;
    display: flex;
    align-items: center;
    justify-content: center;
    border-right: 1px solid #bbb;
    background: linear-gradient(#fff, #f0f0f0);
}

.pg:last-child {
    border-right: 0;
}

.pg-tri.tri-up {
    border-width: 0 6px 9px 6px;
    border-bottom-color: #a0a0a0;
    position: relative;
}

.pg-tri.tri-down {
    border-width: 9px 6px 0 6px;
    border-top-color: #a0a0a0;
    position: relative;
}

.bar-top::before,
.bar-bottom::before {
    content: '';
    position: absolute;
    left: -6px;
    width: 12px;
    height: 2px;
    background: #a0a0a0;
}

.bar-top::before {
    top: -3px;
}

.bar-bottom::before {
    top: 1px;
}

/* right panel */
.right-col {
    margin-left: 5px;
    padding-left: 8px;
    width: 304px;
    flex: none;
    border-left: 1px dashed #c4c4c4;
    display: flex;
    flex-direction: column;
    position: relative;
}

.radios {
    height: 20px;
    margin-bottom: 13px;
    display: flex;
    align-items: center;
    flex: none;
    padding-bottom: 2px;
}

.radio {
    width: 19px;
    height: 19px;
    flex: none;
    border: 1px solid #aaa;
    border-radius: 50%;
    background: #fff;
    display: flex;
    align-items: center;
    justify-content: center;
}

.radio i {
    width: 7px;
    height: 7px;
    border-radius: 50%;
    background: #0a9650;
}

.r-label {
    margin-left: 7px;
}

.r-label.first {
    width: 98px;
}

.cat-list {
    width: 290px;
    height: 368px;
    flex: none;
    position: relative;
    overflow: hidden;
    border: 1px solid #aaa;
}

.cat-all {
    width: 272px;
    height: 36px;
    display: flex;
    align-items: center;
    padding-left: 42px;
    background: #fdf0c2;
    color: #222;
}

.cat-row {
    height: 36.500px;
    padding: 13px 0 0 36px;
}

.cat-icon {
    display: block;
    width: 13px;
    height: 7px;
    background: #6f9cc4;
    border: 1px solid #58789a;
    border-radius: 1px;
}

.cat-blur {
    position: absolute;
    left: 66px;
    top: 43px;
}

.cat-scroll {
    position: absolute;
    right: 3px;
    top: 0;
    bottom: 6px;
    width: 11px;
    display: flex;
    flex-direction: column;
    align-items: center;
    padding-top: 10px;
}

.vtrack {
    margin-top: 3px;
    width: 11px;
    flex: 1;
    border-radius: 5px;
    background: #cbcbcb;
    margin-bottom: 9px;
}

.vthumb {
    display: block;
    width: 11px;
    height: 17px;
    border-radius: 5px;
    background: #9c9c9c;
}

.card {
    margin-top: 13px;
    width: 291px;
    height: 288px;
    flex: none;
    display: flex;
    flex-direction: column;
    padding-bottom: 3px;
    background: #fff8d8;
}

.card-head {
    height: 34px;
    flex: none;
    display: flex;
    align-items: center;
    padding-left: 8px;
    color: #0a9650;
    font-size: 20px;
}

.card-head span {
    margin-left: 8px;
}

.card-pic {
    flex: 1;
    display: flex;
    align-items: center;
    justify-content: center;
    color: #c0c0c0;
    padding-bottom: 6px;
}

.card-link {
    height: 36px;
    flex: none;
    display: flex;
    align-items: center;
    padding-left: 10px;
}

.card-link svg {
    width: 13px;
    margin-right: 16px;
    flex: none;
    position: relative;
    top: -2px;
}

.card-link a,
.collapse {
    color: #333;
    text-decoration: underline;
}

.owner-blur {
    margin: 15px 0 0 4px;
    flex: none;
}

.collapse {
    align-self: flex-end;
    margin: 16px 10px 0 0;
    font-size: 16px;
}

/* annotations */
.marks {
    position: absolute;
    left: 0;
    top: 0;
    pointer-events: none;
}
```
